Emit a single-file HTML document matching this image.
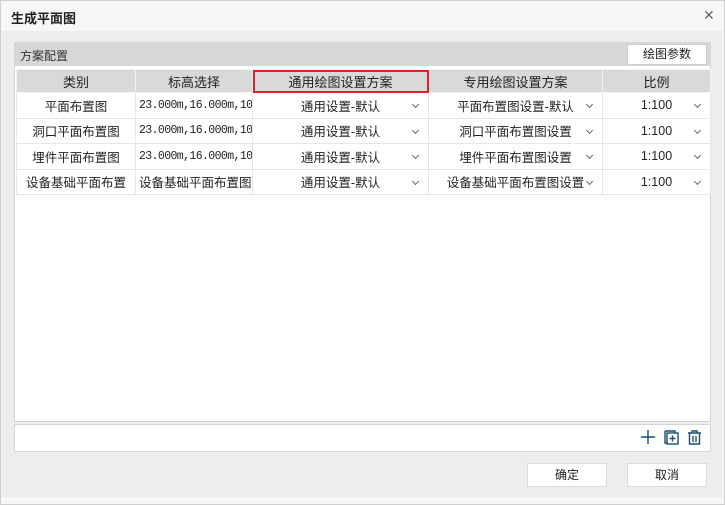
<!DOCTYPE html>
<html><head><meta charset="utf-8"><style>
*{box-sizing:border-box;margin:0;padding:0}
body{width:725px;height:505px;background:#f3f3f3;font-family:"Liberation Sans","Noto Sans CJK SC",sans-serif;font-size:12px;color:#222;position:relative;overflow:hidden}
.win{position:absolute;left:0;top:0;width:725px;height:505px;border:1px solid #cfcfcf;background:#f7f7f7}
.title{position:absolute;left:11px;top:8px;font-size:13px;font-weight:bold;color:#222}
.close{position:absolute;left:703px;top:7px;font-size:14px;color:#666}
.body{position:absolute;left:1px;top:31px;width:721px;height:466px;background:#ededed}
.panel{position:absolute;left:14px;top:42px;width:697px;height:380px;border:1px solid #d4d4d4;background:#fff}
.gh{position:absolute;left:14px;top:42px;width:697px;height:24px;background:#d7d7d7}
.gh span{position:absolute;left:6px;top:5px;color:#333}
.btnp{position:absolute;left:627px;top:44px;width:80px;height:21px;background:#fff;border:1px solid #ccc;text-align:center;line-height:19px}
table{position:absolute;left:16px;top:69px;width:694px;border-collapse:collapse;table-layout:fixed}
td,th{height:24px;border:1px solid #e6e6e6;font-weight:normal;text-align:center;white-space:nowrap;overflow:hidden;position:relative;font-size:12.5px}
th{background:#d9d9d9;border-color:#f3f3f3;height:23px;font-size:13px}
th.red{outline:2px solid #e0202a;outline-offset:-2px}
td{height:25.5px}
.dd:after{content:"";position:absolute;right:10px;top:9px;width:4px;height:4px;border-right:1px solid #666;border-bottom:1px solid #666;transform:rotate(45deg)}
.mono{font-family:"Liberation Mono","Noto Sans CJK SC",monospace;font-size:11.5px;text-align:left;padding-left:3px;letter-spacing:-0.6px}
.tb{position:absolute;left:14px;top:424px;width:697px;height:28px;border:1px solid #d4d4d4;background:#fff}
.b{position:absolute;top:463px;width:80px;height:24px;background:#fff;border:1px solid #dcdcdc;text-align:center;line-height:22px}
</style></head><body>
<div class="win"></div>
<div class="title">生成平面图</div>
<div class="close">✕</div>
<div class="body"></div>
<div class="panel"></div>
<div class="gh"><span>方案配置</span></div>
<div class="btnp">绘图参数</div>
<table>
<colgroup><col style="width:119px"><col style="width:117px"><col style="width:176px"><col style="width:174px"><col style="width:108px"></colgroup>
<tr><th>类别</th><th>标高选择</th><th class="red">通用绘图设置方案</th><th>专用绘图设置方案</th><th>比例</th></tr>
<tr><td>平面布置图</td><td class="mono">23.000m,16.000m,10</td><td class="dd">通用设置-默认</td><td class="dd">平面布置图设置-默认</td><td class="dd">1:100</td></tr>
<tr><td>洞口平面布置图</td><td class="mono">23.000m,16.000m,10</td><td class="dd">通用设置-默认</td><td class="dd">洞口平面布置图设置</td><td class="dd">1:100</td></tr>
<tr><td>埋件平面布置图</td><td class="mono">23.000m,16.000m,10</td><td class="dd">通用设置-默认</td><td class="dd">埋件平面布置图设置</td><td class="dd">1:100</td></tr>
<tr><td>设备基础平面布置</td><td style="text-align:left;padding-left:3px">设备基础平面布置图</td><td class="dd">通用设置-默认</td><td class="dd">设备基础平面布置图设置</td><td class="dd">1:100</td></tr>
</table>
<div class="tb"></div>
<svg style="position:absolute;left:638px;top:428px" width="70" height="18" viewBox="0 0 70 18" fill="none" stroke="#1b4e6b" stroke-width="1.4">
<path d="M10 2v14M3 9h14"/>
<path d="M27 3v12h2M27 3h10v2"/><rect x="29" y="5" width="11" height="11"/><path d="M34.5 7.5v6M31.5 10.5h6"/>
<path d="M50 5h13M54 5V3h5v2M51.5 5v11h10V5M55 8v6M58 8v6"/>
</svg>
<div class="b" style="left:527px">确定</div>
<div class="b" style="left:627px">取消</div>
</body></html>
